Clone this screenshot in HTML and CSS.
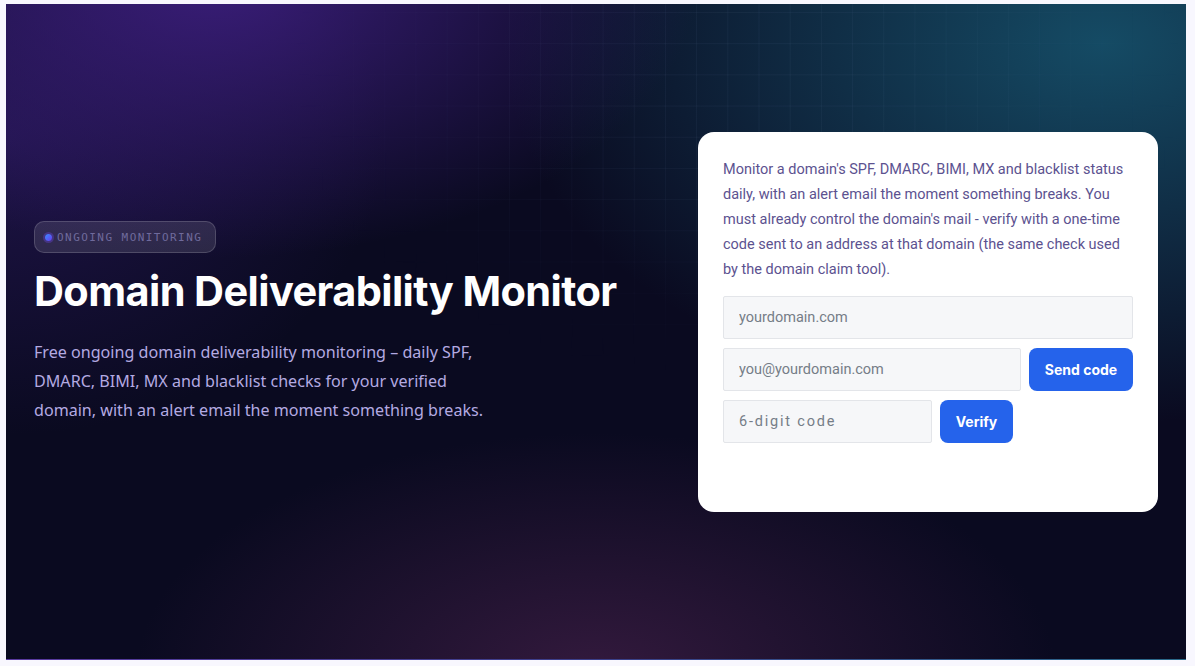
FILE: index.html
```html
<!DOCTYPE html>
<html lang="en">
<head>
<meta charset="utf-8">
<title>Domain Deliverability Monitor</title>
<link rel="stylesheet" href="styles.css">
</head>
<body>
<section class="hero">
  <div class="hero-grid"></div>
  <div class="intro">
    <div class="badge"><span class="dot"></span><span class="badge-text">ONGOING MONITORING</span></div>
    <h1 class="title">Domain Deliverability Monitor</h1>
    <p class="lead">Free ongoing domain deliverability monitoring – daily SPF, DMARC, BIMI, MX and blacklist checks for your verified domain, with an alert email the moment something breaks.</p>
  </div>
  <div class="card">
    <p class="card-text">Monitor a domain's SPF, DMARC, BIMI, MX and blacklist status daily, with an alert email the moment something breaks. You must already control the domain's mail - verify with a one-time code sent to an address at that domain (the same check used by the domain claim tool).</p>
    <div class="form">
      <input class="field" type="text" placeholder="yourdomain.com">
      <div class="row">
        <input class="field grow" type="email" placeholder="you@yourdomain.com">
        <button class="btn send">Send code</button>
      </div>
      <div class="row">
        <input class="field code" type="text" placeholder="6-digit code">
        <button class="btn verify">Verify</button>
      </div>
    </div>
  </div>
</section>
</body>
</html>
```
FILE: styles.css
```css
* { box-sizing: border-box; }
html, body { margin: 0; padding: 0; }
body {
  background: #f8f7fe;
  font-family: Inter, "Noto Sans", sans-serif;
  height: 666px;
  overflow: hidden;
}
.hero {
  position: relative;
  margin: 4px 9px 0 6px;
  height: 656px;
  padding: 0 28px 20px;
  display: grid;
  grid-template-columns: 1fr 460px;
  column-gap: 40px;
  align-items: center;
  overflow: hidden;
  background:
    linear-gradient(90deg, #5a3aa0, #3a3f8a 50%, #2a6a8a) bottom / 100% 1px no-repeat,
    radial-gradient(ellipse 480px 280px at 18% -4%, rgba(60, 30, 125, 0.95), rgba(60, 30, 125, 0) 100%),
    radial-gradient(ellipse 600px 380px at 93% 6%, rgba(22, 82, 108, 0.9), rgba(22, 82, 108, 0) 100%),
    radial-gradient(ellipse 460px 240px at 50% 102%, rgba(58, 28, 66, 0.85), rgba(58, 28, 66, 0) 100%),
    radial-gradient(ellipse 380px 300px at 0% 20%, rgba(40, 24, 90, 0.7), rgba(40, 24, 90, 0) 100%),
    #0a0a20;
}
.hero-grid {
  position: absolute;
  inset: 0;
  pointer-events: none;
  background-image:
    linear-gradient(rgba(150, 170, 220, 0.06) 1px, transparent 1px),
    linear-gradient(90deg, rgba(150, 170, 220, 0.06) 1px, transparent 1px);
  background-size: 31.2px 31.2px;
  background-position: 4px 8px;
  -webkit-mask-image: radial-gradient(ellipse 460px 300px at 62% 12%, #000 20%, transparent 100%);
  mask-image: radial-gradient(ellipse 460px 300px at 62% 12%, #000 20%, transparent 100%);
}
.intro { position: relative; }
.badge {
  display: inline-flex;
  align-items: center;
  gap: 5px;
  height: 32px;
  margin-top: 2px;
  padding: 0 13px 0 10px;
  border-radius: 10px;
  background: rgba(255, 255, 255, 0.11);
  border: 1px solid rgba(255, 255, 255, 0.16);
}
.dot {
  width: 7px;
  height: 7px;
  border-radius: 50%;
  background: linear-gradient(135deg, #3a8cff, #6a3cf0);
  box-shadow: 0 0 0 2px rgba(110, 70, 230, 0.35);
}
.badge-text {
  font-family: "DejaVu Sans Mono", "Liberation Mono", monospace;
  font-size: 11px;
  letter-spacing: 1.45px;
  color: #6f6a9c;
}
.title {
  margin: 13px 0 0;
  font-family: Inter, "Noto Sans", sans-serif;
  font-weight: 700;
  font-size: 41.5px;
  line-height: 50px;
  letter-spacing: -0.6px;
  color: #ffffff;
}
.lead {
  margin: 22px 0 0;
  max-width: 470px;
  font-family: "Noto Sans", Inter, sans-serif;
  font-size: 16.1px;
  line-height: 29px;
  color: #b4aae2;
}
.card {
  position: relative;
  height: 380px;
  background: #ffffff;
  border-radius: 16px;
  padding: 25px 25px;
}
.card-text {
  margin: 0 0 14px;
  font-family: Roboto, "Noto Sans", sans-serif;
  font-size: 14.5px;
  line-height: 25px;
  color: #5c5290;
}
.form { display: flex; flex-direction: column; gap: 9px; }
.row { display: flex; gap: 8px; }
.field {
  height: 43px;
  padding: 0 15px;
  border: 1px solid #e3e5e9;
  border-radius: 2px;
  background: #f6f7f9;
  font-family: Roboto, "Noto Sans", sans-serif;
  font-size: 14.5px;
  color: #333;
  outline: none;
}
.field::placeholder { color: #757d87; }
.grow { flex: 1; min-width: 0; }
.code { width: 209px; letter-spacing: 1.8px; }
.btn {
  height: 43px;
  border: none;
  border-radius: 8px;
  background: #2563eb;
  color: #ffffff;
  font-family: Inter, "Noto Sans", sans-serif;
  font-weight: 700;
  font-size: 14px;
  cursor: pointer;
}
.send { width: 104px; }
.verify { width: 73px; }
```
